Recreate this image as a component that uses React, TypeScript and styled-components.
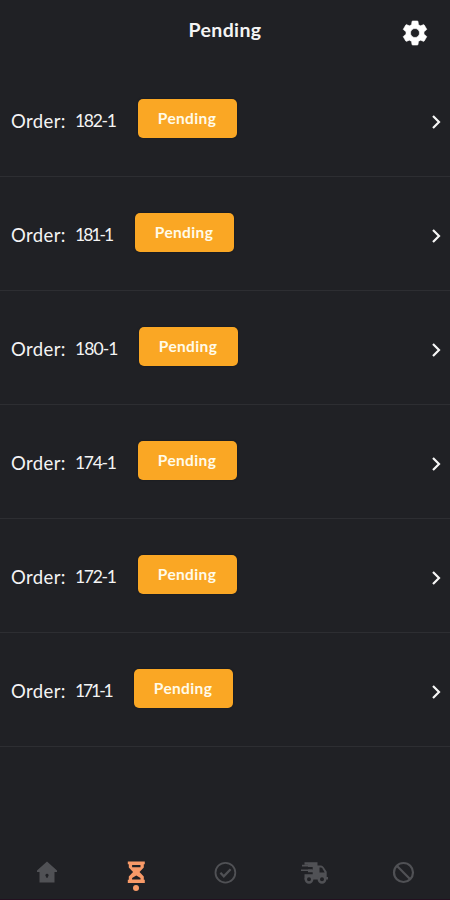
import React from "react";
import styled, { createGlobalStyle } from "styled-components";

const GlobalStyle = createGlobalStyle`
  * { box-sizing: border-box; }
  body { margin: 0; background: #202125; }
`;

const Screen = styled.div`
  display: flex;
  flex-direction: column;
  width: 450px;
  height: 900px;
  overflow: hidden;
  background: #202125;
  border-bottom: 1px solid #241020;
  color: #f4f4f4;
  font-family: Lato, "Liberation Sans", sans-serif;
`;

const Header = styled.header`
  display: grid;
  grid-template-columns: 1fr auto 1fr;
  height: 63px;
  padding: 18px 20px 0 0;
`;

const Title = styled.h1`
  grid-column: 2;
  margin: 0 -20px 0 0;
  font-size: 19.5px;
  line-height: 24px;
  font-weight: 700;
  letter-spacing: 0.35px;
`;

const SettingsButton = styled.button`
  justify-self: end;
  height: 30px;
  padding: 0;
  border: 0;
  background: none;
  color: #fff;
  svg { display: block; }
`;

const OrderList = styled.main`
  flex: 1;
`;

const OrderRow = styled.div`
  display: flex;
  align-items: flex-start;
  height: 114px;
  padding: 36px 8px 0 11px;
  border-bottom: 1px solid #2d2e32;
`;

const Label = styled.span`
  width: 64px;
  padding-top: 10px;
  font-size: 18.5px;
  line-height: 24px;
  letter-spacing: 0.4px;
  white-space: nowrap;
`;

const OrderNumber = styled.span<{ $width: number; $tracking: number }>`
  width: ${(p) => p.$width}px;
  padding-top: 10px;
  font-size: 17.5px;
  line-height: 24px;
  letter-spacing: ${(p) => p.$tracking}px;
  white-space: nowrap;
`;

const Badge = styled.span`
  width: 99px;
  height: 39px;
  border-radius: 5px;
  background: #faa724;
  color: #fffbe9;
  font-size: 15.5px;
  line-height: 38px;
  font-weight: 700;
  letter-spacing: 0.35px;
  text-indent: -1px;
  text-align: center;
  box-shadow: 0 0 2px #15171d;
`;

const Chevron = styled.svg`
  margin: 15px 0 0 auto;
  width: 12px;
  height: 16px;
`;

const TabBar = styled.nav`
  display: grid;
  grid-template-columns: repeat(5, 89.2px);
  height: 43px;
  padding: 0 2px;
`;

const Tab = styled.button<{ $active?: boolean }>`
  display: flex;
  flex-direction: column;
  align-items: center;
  padding: 4px 0 0;
  border: 0;
  background: none;
  color: ${(p) => (p.$active ? "#f89a68" : "#505155")};
`;

const ActiveDot = styled.i`
  width: 6px;
  height: 6px;
  margin: 1px 0 0 1px;
  border-radius: 50%;
  background: #f89a68;
`;

const orders = [
  { id: "182-1", width: 63, tracking: -1.3 },
  { id: "181-1", width: 60, tracking: -2 },
  { id: "180-1", width: 64, tracking: -0.9 },
  { id: "174-1", width: 63, tracking: -1.3 },
  { id: "172-1", width: 63, tracking: -1.3 },
  { id: "171-1", width: 59, tracking: -2.1 },
];

const GearIcon = () => (
  <svg width="30" height="30" viewBox="0 0 24 24" fill="currentColor">
    <path d="M19.14 12.94c.04-.3.06-.61.06-.94 0-.32-.02-.64-.07-.94l2.03-1.58a.49.49 0 0 0 .12-.61l-1.92-3.32a.488.488 0 0 0-.59-.22l-2.39.96c-.5-.38-1.03-.7-1.62-.94l-.36-2.54a.484.484 0 0 0-.48-.41h-3.84c-.24 0-.43.17-.47.41l-.36 2.54c-.59.24-1.13.57-1.62.94l-2.39-.96c-.22-.08-.47 0-.59.22L2.74 8.87c-.12.21-.08.47.12.61l2.03 1.58c-.05.3-.09.63-.09.94s.02.64.07.94l-2.03 1.58a.49.49 0 0 0-.12.61l1.92 3.32c.12.22.37.29.59.22l2.39-.96c.5.38 1.03.7 1.62.94l.36 2.54c.05.24.24.41.48.41h3.84c.24 0 .44-.17.47-.41l.36-2.54c.59-.24 1.13-.56 1.62-.94l2.39.96c.22.08.47 0 .59-.22l1.92-3.32c.12-.22.07-.47-.12-.61l-2.01-1.58zM12 15.6A3.6 3.6 0 1 1 12 8.4a3.6 3.6 0 0 1 0 7.2z" stroke="currentColor" strokeWidth=".5" />
  </svg>
);

const HomeIcon = () => (
  <svg width="24" height="24" viewBox="0 0 24 24" fill="currentColor">
    <path fillRule="evenodd" d="M12 1.5 2 10.5V12h2.5v10.5h15V12H22v-1.5L12 1.5Zm0 12.2a1.6 1.6 0 0 1 .8 3v1h-1.6v-1a1.6 1.6 0 0 1 .8-3Z" />
  </svg>
);

const HourglassIcon = () => (
  <svg width="20" height="24" viewBox="0 0 20 24">
    <path d="M1.8 1.5h17v2.8h-1v3.2L13.5 12l4.3 4.5v3.3h1v3.2h-17v-3.2h1v-3.3L7.1 12 2.8 7.5V4.3h-1Z" fill="currentColor" />
    <path d="M6.1 5h8.4v2.2H6.1ZM10.3 15.6l4.2 2.4v1.6H6.1V18Z" fill="#202125" />
  </svg>
);

const CheckIcon = () => (
  <svg width="24" height="26" viewBox="0 0 24 26" fill="none" stroke="currentColor">
    <circle cx="12.4" cy="12.7" r="9.9" strokeWidth="1.8" />
    <path d="m7.4 12.8 3.4 3.5 6.8-7" strokeWidth="2.3" />
  </svg>
);

const TruckIcon = () => (
  <svg width="28" height="26" viewBox="0 0 28 26" fill="none">
    <path d="M4.5 2.2h13V5.5H21q1.6 0 2.7 1.7l3 4.6V17h1.3v2.5H4.5v-5.3h8.2v-2H8V9.5h4.7V7H8V4.7H4.5Z" fill="currentColor" />
    <path d="M2 5.6h11M1 10.2h11" stroke="currentColor" strokeWidth="1.6" />
    <path d="M19.5 7.5H21q.7 0 1.2.8l2.5 4.1h-5.2Z" fill="#202125" />
    <g fill="#202125" stroke="currentColor" strokeWidth="2.4">
      <circle cx="9" cy="19.3" r="3.2" />
      <circle cx="22" cy="19.3" r="3.2" />
    </g>
  </svg>
);

const BanIcon = () => (
  <svg width="24" height="26" viewBox="0 0 24 26" fill="none" stroke="currentColor" strokeWidth="2.2">
    <circle cx="12.5" cy="12.5" r="9.5" />
    <path d="m5.8 5.8 13.4 13.4" />
  </svg>
);

export default function App() {
  return (
    <>
      <GlobalStyle />
      <Screen>
        <Header>
          <Title>Pending</Title>
          <SettingsButton aria-label="Settings"><GearIcon /></SettingsButton>
        </Header>
        <OrderList>
          {orders.map((order) => (
            <OrderRow key={order.id}>
              <Label>Order:</Label>
              <OrderNumber $width={order.width} $tracking={order.tracking}>{order.id}</OrderNumber>
              <Badge>Pending</Badge>
              <Chevron viewBox="0 0 12 16" fill="none" stroke="#f6f6f6" strokeWidth="2.2">
                <path d="m3 2 6 6-6 6" />
              </Chevron>
            </OrderRow>
          ))}
        </OrderList>
        <TabBar>
          <Tab aria-label="Home"><HomeIcon /></Tab>
          <Tab aria-label="Pending orders" $active><HourglassIcon /><ActiveDot /></Tab>
          <Tab aria-label="Completed"><CheckIcon /></Tab>
          <Tab aria-label="Deliveries"><TruckIcon /></Tab>
          <Tab aria-label="Cancelled"><BanIcon /></Tab>
        </TabBar>
      </Screen>
    </>
  );
}
